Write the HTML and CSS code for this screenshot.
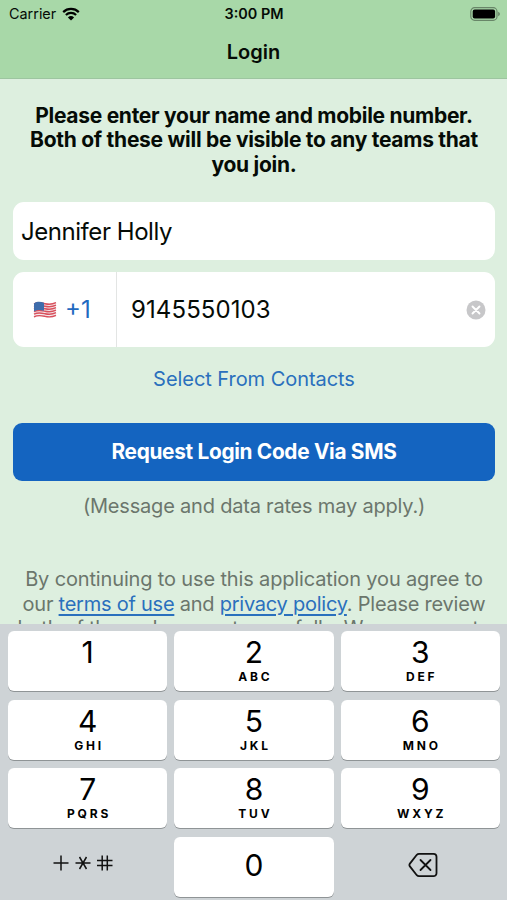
FILE: index.html
```
<!DOCTYPE html>
<html lang="en">

<head>
  <meta charset="UTF-8">
  <meta name="viewport" content="width=device-width, initial-scale=1.0">
  <title>Login</title>
  <link rel="stylesheet" href="styles.css">
</head>

<body>
  <div class="screen">
    <header>
      <div class="status">
        <div class="carrier">
          <span>Carrier</span>
          <svg width="18" height="14" viewBox="0 0 18 14">
            <path d="M1.2 5.1a11.2 11.2 0 0 1 15.6 0M3.9 8a7.3 7.3 0 0 1 10.2 0" fill="none" stroke="#000" stroke-width="2.2"/>
            <path d="M9 13.6L5.9 10.4a4.5 4.5 0 0 1 6.2 0z"/>
          </svg>
        </div>
        <div class="time">3:00 PM</div>
        <div class="battery">
          <svg width="31" height="14" viewBox="0 0 31 14">
            <rect x=".8" y=".7" width="26.2" height="12.6" rx="3.8" fill="none" stroke="#000" stroke-opacity=".38" stroke-width="1.2"/>
            <rect x="2.7" y="2.6" width="22.4" height="8.8" rx="2"/>
            <path d="M28.2 4.8c2.2.8 2.2 3.6 0 4.4z" fill-opacity=".4"/>
          </svg>
        </div>
      </div>
      <h1>Login</h1>
    </header>

    <main>
      <p class="intro">Please enter your name and mobile number.<br>Both of these will be visible to any teams that<br>you join.</p>
      <div class="field name"><span>Jennifer Holly</span></div>
      <div class="field phone">
        <div class="country">
          <svg width="24" height="18" viewBox="0 0 24 18">
            <path d="M1 2.4C5-.2 9 1.2 12 1.9s7 .9 11-1v14.2c-4 2.4-8 1.7-11 1S5 15.2 1 17z" fill="#f3e9ec"/>
            <path d="M1 3.2C5 .6 9 2 12 2.7s7 .9 11-1M1 5.7c4-2.6 8-1.2 11-.5s7 .9 11-1M1 8.2c4-2.6 8-1.2 11-.5s7 .9 11-1M1 10.7c4-2.3 8-1.2 11-.5s7 .9 11-1M1 13.2c4-2.3 8-1.2 11-.5s7 .9 11-1M1 15.9c4-2.3 8-1.2 11-.5s7 .9 11-1" fill="none" stroke="#d9505c" stroke-width="1.4"/>
            <path d="M1 2.4C5-.2 8 1 11 1.7v8C8 9 5 8.3 1 10.4z" fill="#3e6cab"/>
          </svg>
          <span>+1</span>
        </div>
        <div class="number">9145550103</div>
        <svg class="clear" width="20" height="20" viewBox="0 0 20 20">
          <circle cx="10" cy="10" r="9.5" fill="#c7c7c9"/>
          <path d="M6.5 6.5l7 7M13.5 6.5l-7 7" stroke="#fff" stroke-width="1.9" stroke-linecap="round"/>
        </svg>
      </div>
      <div class="contacts"><span>Select From Contacts</span></div>
      <div class="submit"><span>Request Login Code Via SMS</span></div>
      <p class="rates">(Message and data rates may apply.)</p>
      <p class="terms">By continuing to use this application you agree to<br><span class="tight">our <a href="#">terms of use</a> and <a href="#">privacy policy</a>. Please review<br>both of these documents carefully. We are eager to</span></p>
    </main>

    <div class="keyboard">
      <div class="key"><b>1</b></div>
      <div class="key"><b>2</b><i>ABC</i></div>
      <div class="key"><b>3</b><i>DEF</i></div>
      <div class="key"><b>4</b><i>GHI</i></div>
      <div class="key"><b>5</b><i>JKL</i></div>
      <div class="key"><b>6</b><i>MNO</i></div>
      <div class="key"><b>7</b><i>PQRS</i></div>
      <div class="key"><b>8</b><i>TUV</i></div>
      <div class="key"><b>9</b><i>WXYZ</i></div>
      <div class="key plain symbols">
        <svg width="62" height="20" viewBox="0 0 62 20">
          <path d="M1.5 10h15M9 2.5v15M23.500 10h15M27.500 4l7 12M34.500 4l-7 12M45 7.5h15.5M45 12.5h15.5M50.200 2.5v15M55.300 2.5v15" fill="none" stroke="#111" stroke-width="1.5"/>
        </svg>
      </div>
      <div class="key zero"><b>0</b></div>
      <div class="key plain delete">
        <svg width="30" height="26" viewBox="0 0 30 26">
          <path d="M11 1.8h14.5a3 3 0 0 1 3 3v16.4a3 3 0 0 1-3 3H11q-1.3 0-2.2-1L1.9 14.4q-1-1.4 0-2.8L8.8 2.8q.9-1 2.2-1z" fill="none" stroke="#111" stroke-width="1.8"/>
          <path d="M12.5 8l10 10M22.5 8l-10 10" stroke="#111" stroke-width="1.8" stroke-linecap="round"/>
        </svg>
      </div>
    </div>
  </div>
</body>

</html>
```
FILE: styles.css
```
body{
  margin: 0;
  font-family: Inter, "Liberation Sans", sans-serif;
  color: #050b06;
}
h1,p{
  margin: 0;
}
.screen{
  width: 507px;
  height: 900px;
  display: flex;
  flex-direction: column;
  overflow: hidden;
  background: #ddefdf;
}
header{
  flex-shrink: 0;
  height: 79px;
  box-sizing: border-box;
  background: #a8d8a8;
  border-bottom: 1px solid #9dc5a0;
}
.status{
  height: 27px;
  display: grid;
  grid-template-columns: 1fr auto 1fr;
  align-items: center;
  padding: 0 6px 0 9px;
  font-size: 14.4px;
}
.carrier{
  display: flex;
  align-items: center;
  gap: 6px;
}
.time{
  font-weight: 600;
  margin-right: 2px;
}
.battery{
  display: flex;
  justify-content: flex-end;
}
h1{
  font-size: 20px;
  line-height: 51px;
  font-weight: 600;
  text-align: center;
}
main{
  flex: 1;
  min-height: 0;
  overflow: hidden;
  padding: 25px 12px 0 13px;
  text-align: center;
  white-space: nowrap;
}
.intro{
  font-size: 21px;
  line-height: 24.4px;
  font-weight: 650;
  letter-spacing: -.28px;
}
.field{
  display: flex;
  align-items: center;
  background: #fff;
  border-radius: 11px;
  font-size: 24px;
}
.name{
  height: 58px;
  margin-top: 25px;
  padding-left: 8px;
  letter-spacing: -.45px;
}
.phone{
  height: 75px;
  margin-top: 12px;
}
.country{
  width: 104px;
  height: 100%;
  box-sizing: border-box;
  display: flex;
  align-items: center;
  gap: 8px;
  padding-left: 20px;
  border-right: 1px solid #e3e5e4;
  color: #1f69c0;
}
.number{
  flex: 1;
  padding-left: 14px;
  text-align: left;
  letter-spacing: .1px;
}
.clear{
  margin-right: 9px;
}
.contacts{
  margin-top: 20px;
  font-size: 20px;
  line-height: 24px;
  letter-spacing: -.05px;
  color: #2a70bd;
}
.submit{
  height: 58px;
  margin-top: 31.5px;
  border-radius: 9px;
  background: #1464c0;
  color: #fff;
  font-size: 20.8px;
  line-height: 58px;
  font-weight: 650;
  letter-spacing: -.3px;
}
.rates{
  margin-top: 13.5px;
  font-size: 20px;
  line-height: 24px;
  letter-spacing: -.2px;
  color: #6b766c;
}
.terms{
  margin-top: 48.5px;
  font-size: 20px;
  line-height: 24.8px;
  letter-spacing: -.15px;
  color: #6b766c;
}
.tight{
  letter-spacing: -.24px;
}
.terms a{
  color: #2a70bd;
  text-underline-offset: 3px;
  text-decoration-thickness: 1.5px;
}
.keyboard{
  flex-shrink: 0;
  height: 276px;
  box-sizing: border-box;
  display: grid;
  grid-template-columns: repeat(3, 1fr);
  grid-auto-rows: 60px;
  gap: 8.5px 7px;
  padding: 7px 7px 0 8px;
  background: #ced3d6;
}
.key{
  display: flex;
  flex-direction: column;
  align-items: center;
  background: #fff;
  border-radius: 6px;
  box-shadow: 0 1px 0 #8f9496;
  color: #000;
}
.key b{
  margin-top: 6px;
  font-size: 30px;
  line-height: 31px;
  font-weight: 380;
}
.key i{
  margin: 3px -2.8px 0 0;
  font-size: 12px;
  line-height: 12px;
  font-style: normal;
  font-weight: 650;
  letter-spacing: 2.8px;
}
.plain{
  justify-content: center;
  background: none;
  box-shadow: none;
}
.symbols{
  padding: 0 9px 8px 0;
}
.delete{
  padding: 0 0 3px 6px;
}
.zero b{
  margin-top: 13px;
}
```
